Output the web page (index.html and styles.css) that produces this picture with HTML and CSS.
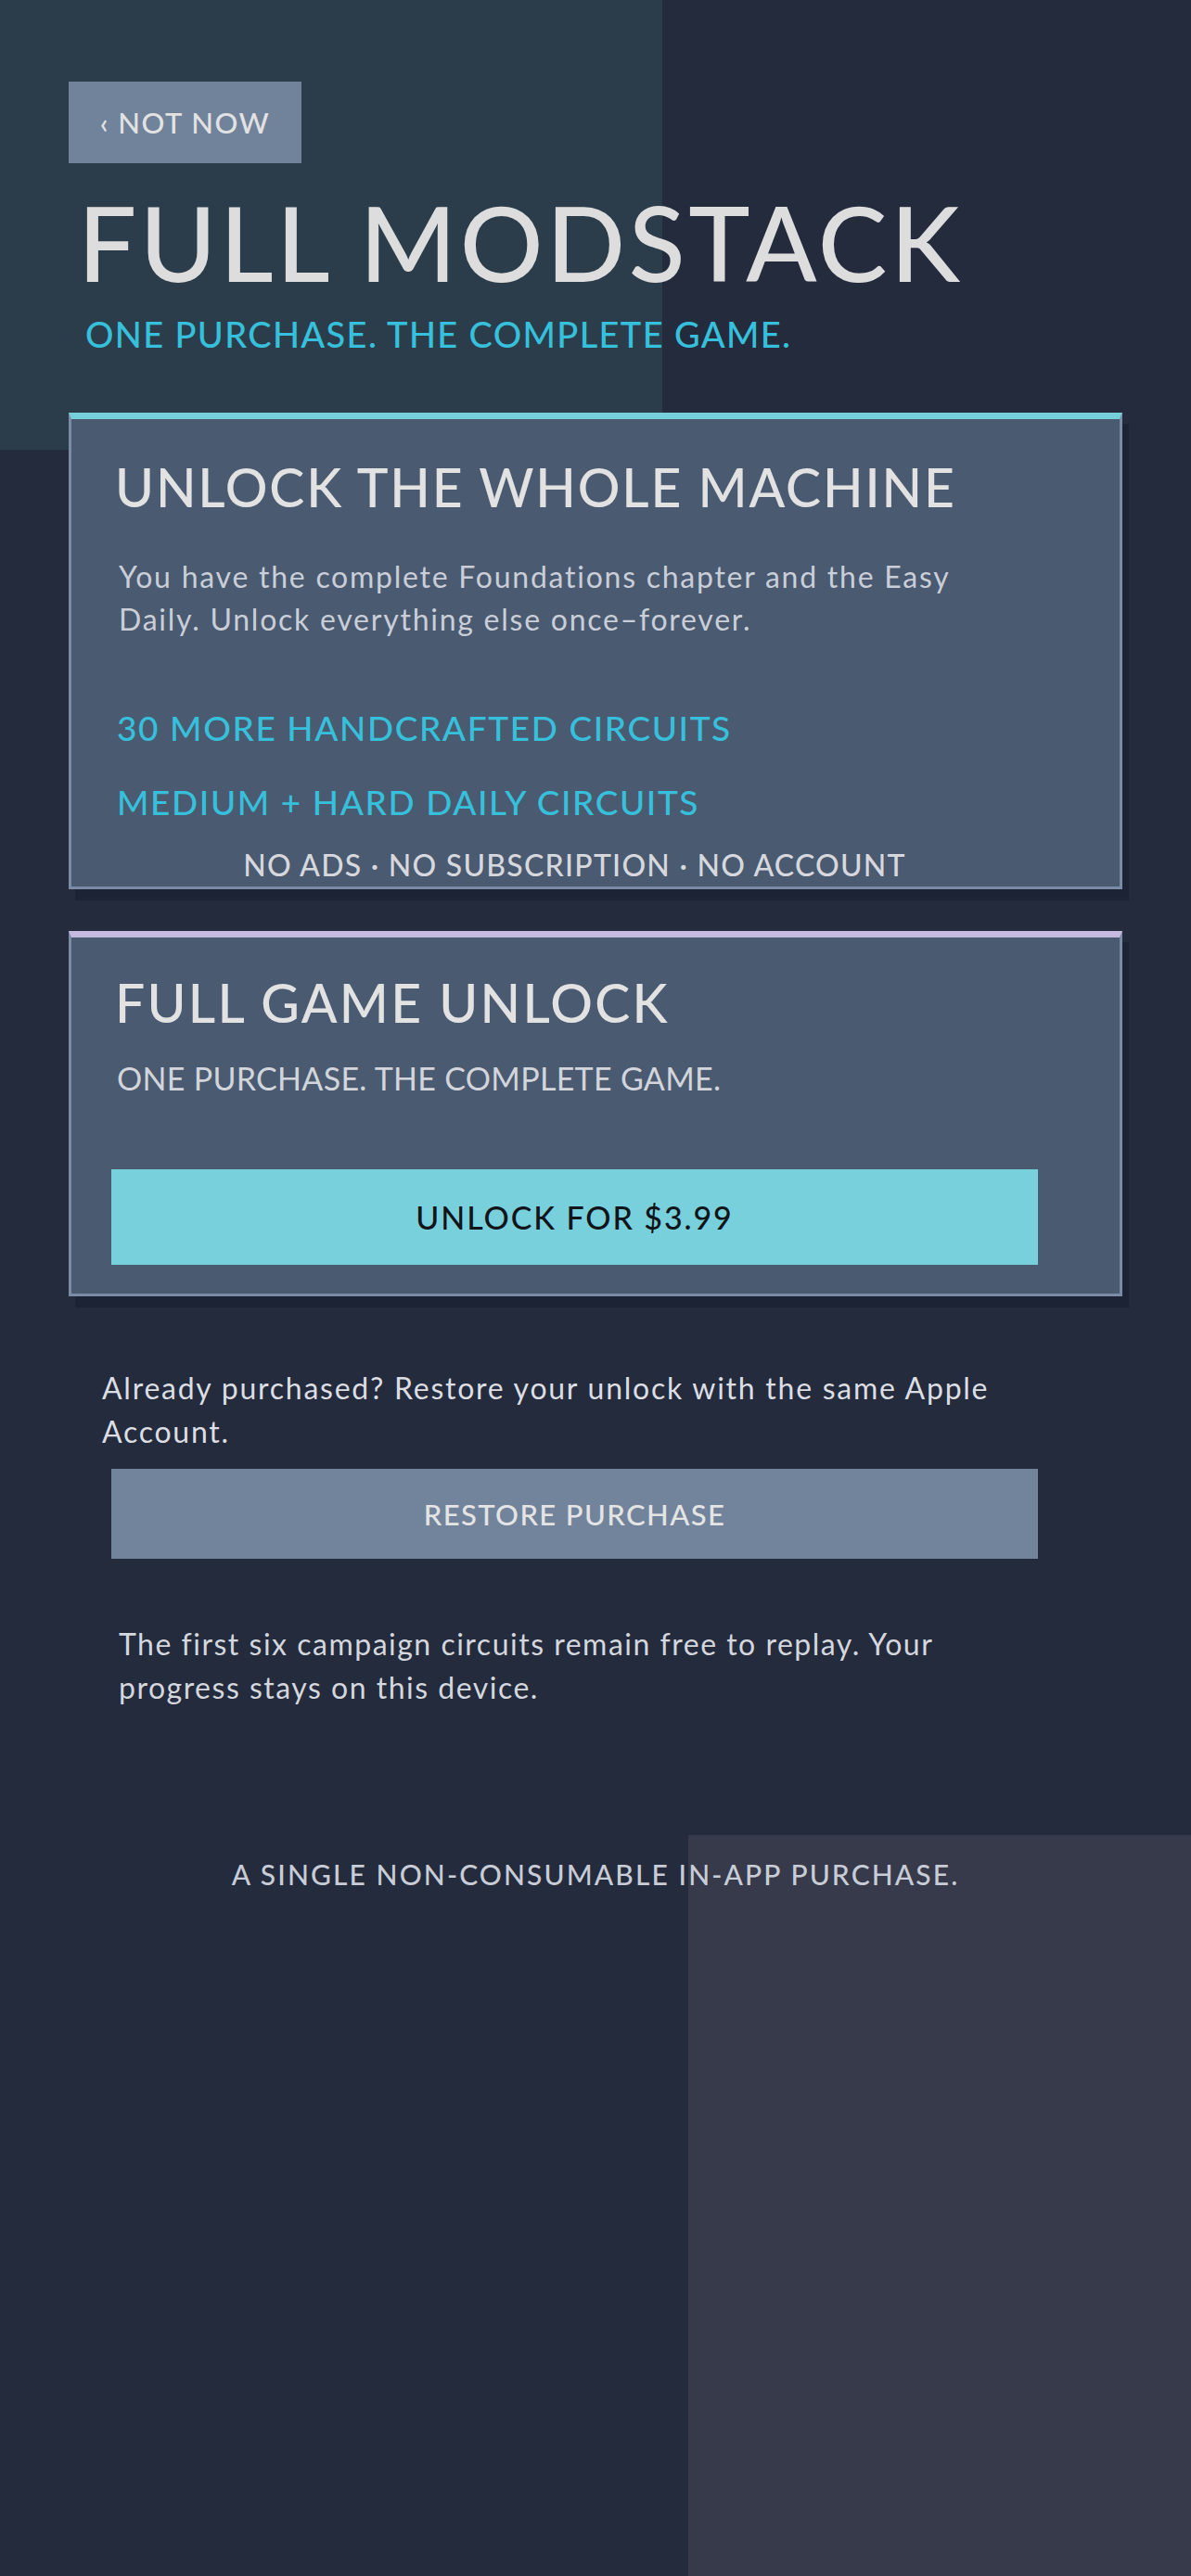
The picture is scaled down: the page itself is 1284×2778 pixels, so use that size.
FILE: index.html
```html
<!DOCTYPE html>
<html lang="en">
<head>
<meta charset="utf-8">
<title>Full Modstack</title>
<link rel="stylesheet" href="styles.css">
</head>
<body>
<div class="screen">
  <button class="back">‹ NOT NOW</button>
  <h1 class="title">FULL MODSTACK</h1>
  <p class="tagline">ONE PURCHASE. THE COMPLETE GAME.</p>

  <section class="card card-info">
    <h2 class="card-title">UNLOCK THE WHOLE MACHINE</h2>
    <p class="card-body">You have the complete Foundations chapter and the Easy Daily. Unlock everything else once–forever.</p>
    <ul class="features">
      <li class="feature">30 MORE HANDCRAFTED CIRCUITS</li>
      <li class="feature">MEDIUM + HARD DAILY CIRCUITS</li>
    </ul>
    <p class="perks">NO ADS · NO SUBSCRIPTION · NO ACCOUNT</p>
  </section>

  <section class="card card-buy">
    <h2 class="card-title">FULL GAME UNLOCK</h2>
    <p class="card-sub">ONE PURCHASE. THE COMPLETE GAME.</p>
    <button class="btn-unlock">UNLOCK FOR $3.99</button>
  </section>

  <section class="restore">
    <p class="restore-text">Already purchased? Restore your unlock with the same Apple Account.</p>
    <button class="btn-restore">RESTORE PURCHASE</button>
  </section>

  <p class="note">The first six campaign circuits remain free to replay. Your progress stays on this device.</p>

  <p class="legal">A SINGLE NON-CONSUMABLE IN-APP PURCHASE.</p>
</div>
</body>
</html>
```

FILE: styles.css
```css
* { box-sizing: border-box; }

html, body {
  margin: 0;
  padding: 0;
  background: #232b3d;
}

.screen {
  min-height: 2778px;
  width: 1284px;
  padding: 88px 0 0 74px;
  display: flex;
  flex-direction: column;
  align-items: flex-start;
  font-family: "Lato", "Noto Sans", sans-serif;
  background:
    linear-gradient(#2b3d4b, #2b3d4b) 0 0 / 714px 485px no-repeat,
    linear-gradient(#363a4b, #363a4b) 742px 1979px / 542px 799px no-repeat,
    #232b3d;
}

.screen > * { margin: 0; }

button {
  font-family: inherit;
  border: 0;
  cursor: pointer;
}

.back {
  width: 251px;
  height: 88px;
  padding: 0;
  background: #71839a;
  color: #e2e2e2;
  font-size: 31px;
  font-weight: 500;
  line-height: 88px;
  text-align: center;
  letter-spacing: 1.5px;
}

.title {
  margin-top: 29px;
  padding-left: 10px;
  font-size: 112px;
  line-height: 112px;
  font-weight: 500;
  color: #dddddd;
  letter-spacing: 3.5px;
}

.tagline {
  margin-top: 20px;
  padding-left: 18px;
  font-size: 38px;
  line-height: 46px;
  font-weight: 500;
  color: #36c0db;
  letter-spacing: 1.35px;
}

.card {
  width: 1136px;
  background: #4a5a70;
  border: 3px solid #7a8ca5;
  border-top-width: 7px;
  box-shadow: 7px 12px 0 #1c2334;
  padding: 0 88px 0 43px;
  display: flex;
  flex-direction: column;
}

.card > * { margin: 0; }

.card-info {
  margin-top: 62px;
  border-top-color: #76d0dc;
  padding-top: 39px;
  padding-bottom: 4px;
}

.card-buy {
  margin-top: 45px;
  border-top-color: #c5b9e0;
  padding-top: 36px;
  padding-bottom: 31px;
}

.card-title {
  padding-left: 4px;
  font-size: 57px;
  line-height: 68px;
  font-weight: 500;
  color: #e2e2e2;
  letter-spacing: 1.85px;
}

.card-buy .card-title { letter-spacing: 2.3px; }

.card-body {
  margin-top: 40px;
  padding-left: 8px;
  max-width: 950px;
  font-size: 32px;
  line-height: 46px;
  font-weight: 400;
  color: #c9ced8;
  letter-spacing: 1.75px;
}

.features {
  list-style: none;
  margin: 0;
  padding: 0 0 0 6px;
}

.feature {
  margin-top: 36px;
  font-size: 37px;
  line-height: 44px;
  font-weight: 500;
  color: #36c0db;
  letter-spacing: 1.6px;
}

.feature:first-child { margin-top: 72px; }

.perks {
  margin-top: 27px;
  font-size: 32px;
  line-height: 38px;
  font-weight: 500;
  color: #d6d8de;
  text-align: center;
  letter-spacing: 1.25px;
}

.card-sub {
  margin-top: 28px;
  padding-left: 6px;
  font-size: 34px;
  line-height: 40px;
  font-weight: 400;
  color: #d2d5db;
  letter-spacing: 0.3px;
}

.btn-unlock {
  margin-top: 78px;
  width: 999px;
  height: 103px;
  background: #78d0dc;
  color: #111418;
  font-size: 34px;
  font-weight: 500;
  letter-spacing: 1.9px;
}

.restore {
  margin-top: 75px;
  display: flex;
  flex-direction: column;
  align-items: flex-start;
}

.restore-text {
  margin: 0 0 0 36px;
  width: 1000px;
  font-size: 32px;
  line-height: 47px;
  font-weight: 400;
  color: #dcdee3;
  letter-spacing: 1.75px;
}

.btn-restore {
  margin: 17px 0 0 46px;
  width: 999px;
  height: 97px;
  background: #72849c;
  color: #e4e4e4;
  font-size: 31px;
  font-weight: 500;
  letter-spacing: 1.4px;
}

.note {
  margin-top: 68px;
  margin-left: 54px;
  width: 920px;
  font-size: 32px;
  line-height: 47px;
  font-weight: 400;
  color: #d4d7dd;
  letter-spacing: 1.5px;
}

.legal {
  margin-top: 160px;
  width: 1136px;
  text-align: center;
  font-size: 30px;
  line-height: 36px;
  font-weight: 500;
  color: #c8ccd6;
  letter-spacing: 2.1px;
}
```
